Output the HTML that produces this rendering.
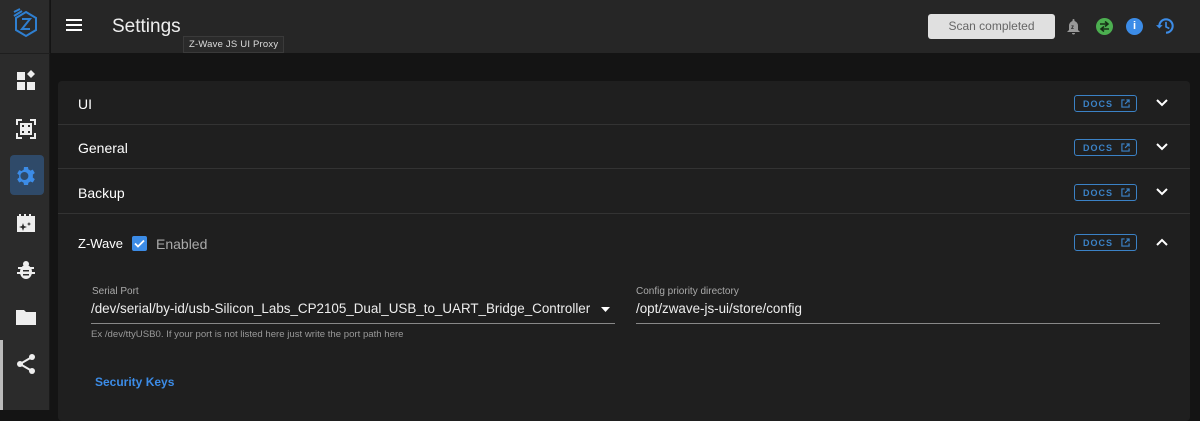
<!DOCTYPE html><html><head><style>
*{margin:0;padding:0;box-sizing:border-box}
body{width:1200px;height:410px;overflow:hidden;background:#141414;font-family:"Liberation Sans",sans-serif;color:#fff;position:relative}
.side{position:absolute;left:0;top:0;width:50px;height:410px;background:#2b2b2b;border-right:1px solid #1a1a1a}
.side .ic{position:absolute;left:14px;width:24px;height:24px}
.top{position:absolute;left:51px;top:0;right:0;height:53px;background:#262626}
.panel{position:absolute;left:58px;top:81px;width:1132px;height:340px;background:#1f1f1f;border-radius:4px}
.row{position:absolute;left:0;width:1132px;height:44px;border-bottom:1px solid #333}
.row .t{position:absolute;left:20px;top:15px;font-size:14px}
.docs{position:absolute;left:1016px;width:63px;height:17px;border:1px solid #3b82c6;border-radius:3px;color:#3b82c6;font-size:9px;letter-spacing:1px;padding:3px 0 0 8px;font-weight:bold}
.docs svg{position:absolute;right:6px;top:3px}
.chev{position:absolute;left:1098px}
.lbl{font-size:10px;color:#aaa;position:absolute}
</style></head><body>
<div class="side">
<svg style="position:absolute;left:11px;top:8px" width="30" height="30" viewBox="0 0 30 30"><polygon points="15,4 25,10 25,22 15,28 5,22 5,10" fill="none" stroke="#2f7fd0" stroke-width="2"/><path d="M3 4 L9 1 M3 8 L11 3" stroke="#2f7fd0" stroke-width="2"/><path d="M11 11h8l-8 10h8" fill="none" stroke="#2f7fd0" stroke-width="2"/></svg>
<div style="position:absolute;left:0;top:53px;width:50px;height:1px;background:#1e1e1e"></div>
<svg class="ic" style="top:69px" viewBox="0 0 24 24" fill="#eee"><rect x="3" y="3" width="8" height="8"/><rect x="3" y="13" width="8" height="8"/><rect x="13" y="13" width="8" height="8"/><polygon points="17,1 21,5 17,9 13,5"/></svg>
<svg class="ic" style="top:117px" viewBox="0 0 24 24" fill="none" stroke="#eee" stroke-width="2"><path d="M3 8V3h5M16 3h5v5M21 16v5h-5M8 21H3v-5"/><rect x="7" y="7" width="4" height="4"/><rect x="13" y="13" width="4" height="4"/><rect x="13" y="7" width="4" height="4"/><rect x="7" y="13" width="4" height="4"/></svg>
<div style="position:absolute;left:10px;top:155px;width:34px;height:40px;background:#2f4a69;border-radius:4px"></div>
<svg class="ic" style="top:164px" viewBox="0 0 24 24" fill="#3c8ce7"><path d="M12 8a4 4 0 100 8 4 4 0 000-8zm8.4 5.5l2 1.6-2 3.4-2.4-1a7.5 7.5 0 01-2 1.2L15.6 21h-4l-.4-2.3a7.5 7.5 0 01-2-1.2l-2.4 1-2-3.4 2-1.6a7 7 0 010-2.4l-2-1.6 2-3.4 2.4 1a7.5 7.5 0 012-1.2L11.6 3h4l.4 2.4a7.5 7.5 0 012 1.2l2.4-1 2 3.4-2 1.6a7 7 0 010 2.4z" transform="translate(-1.6 0)"/></svg>
<svg class="ic" style="top:211px" viewBox="0 0 24 24" fill="#eee"><path d="M3 5h18v16H3z"/><path d="M9 12l1 3 3 1-3 1-1 3-1-3-3-1 3-1zM15 11l.7 1.5 1.5.5-1.5.5-.7 1.5-.7-1.5-1.5-.5 1.5-.5z" fill="#2b2b2b"/><path d="M5 3h2v2H5zM10 3h2v2h-2zM15 3h2v2h-2z"/></svg>
<svg class="ic" style="top:258px" viewBox="0 0 24 24" fill="#eee"><ellipse cx="12" cy="14" rx="6" ry="7"/><circle cx="12" cy="6" r="3"/><path d="M4 9h4v2H4zM16 9h4v2h-4zM3 14h4v2H3zM17 14h4v2h-4z"/><path d="M9 12h6v1.5H9zM9 16h6v1.5H9z" fill="#2b2b2b"/></svg>
<svg class="ic" style="top:305px" viewBox="0 0 24 24" fill="#eee"><path d="M2 5h8l2 2h10v13H2z"/></svg>
<svg class="ic" style="top:352px" viewBox="0 0 24 24" fill="#eee"><circle cx="18" cy="5" r="3"/><circle cx="6" cy="12" r="3"/><circle cx="18" cy="19" r="3"/><path d="M18 5L6 12l12 7" stroke="#eee" stroke-width="2" fill="none"/></svg>
<div style="position:absolute;left:0;top:340px;width:3px;height:70px;background:#bbb"></div>
</div>
<div class="top">
<svg style="position:absolute;left:15px;top:18px" width="18" height="14"><path d="M0 2h16M0 7h16M0 12h16" stroke="#fff" stroke-width="2"/></svg>
<div style="position:absolute;left:61px;top:16px;font-size:19px;color:#eee">Settings</div>
<div style="position:absolute;left:132px;top:36px;background:#2a2a2a;border:1px solid #3a3a3a;color:#ddd;font-size:9.5px;padding:2px 5px;letter-spacing:.2px">Z-Wave JS UI Proxy</div>
<div style="position:absolute;left:877px;top:14px;width:127px;height:25px;background:#e0e0e0;border-radius:3px;color:#666;font-size:12px;text-align:center;line-height:25px">Scan completed</div>
<svg style="position:absolute;left:1015px;top:18px" width="15" height="17" viewBox="0 0 15 17"><path d="M7.5 1a1 1 0 011 1v1a5 5 0 013.5 5v4l2 2H1l2-2V8a5 5 0 013.5-5V2a1 1 0 011-1zM6 15h3a1.5 1.5 0 01-3 0z" fill="#999"/><text x="5" y="11" font-size="6" font-weight="bold" fill="#222" font-family="Liberation Sans">z</text></svg>
<div style="position:absolute;left:1045px;top:18px;width:17px;height:17px;border-radius:50%;background:#4caf50"></div>
<svg style="position:absolute;left:1047px;top:21px" width="13" height="11"><path d="M2 3h8M7 0.5l3 2.5-3 2.5M11 8H3M6 5.5l-3 2.5 3 2.5" stroke="#163016" stroke-width="1.6" fill="none"/></svg>
<div style="position:absolute;left:1075px;top:18px;width:17px;height:17px;border-radius:50%;background:#3c8ce7;color:#fff;font-size:11px;font-weight:bold;text-align:center;line-height:17px">i</div>
<svg style="position:absolute;left:1105px;top:16px" width="20" height="20" viewBox="0 0 24 24"><path d="M4 12a8 8 0 118 8" fill="none" stroke="#3c8ce7" stroke-width="2.5"/><path d="M0 11h8l-4 4z" fill="#3c8ce7"/><path d="M12 7v6l4 2" fill="none" stroke="#3c8ce7" stroke-width="2"/></svg>
</div>
<div class="panel">
<div class="row" style="top:0"><div class="t">UI</div></div>
<div class="row" style="top:44px"><div class="t">General</div></div>
<div class="row" style="top:89px"><div class="t">Backup</div></div>
<div class="docs" style="top:14px">DOCS<svg width="9" height="9" viewBox="0 0 10 10"><path d="M4 1H1v8h8V6M6 1h3v3M9 1L4.5 5.5" stroke="#3b82c6" fill="none" stroke-width="1.3"/></svg></div>
<div class="docs" style="top:58px">DOCS<svg width="9" height="9" viewBox="0 0 10 10"><path d="M4 1H1v8h8V6M6 1h3v3M9 1L4.5 5.5" stroke="#3b82c6" fill="none" stroke-width="1.3"/></svg></div>
<div class="docs" style="top:103px">DOCS<svg width="9" height="9" viewBox="0 0 10 10"><path d="M4 1H1v8h8V6M6 1h3v3M9 1L4.5 5.5" stroke="#3b82c6" fill="none" stroke-width="1.3"/></svg></div>
<div class="docs" style="top:153px">DOCS<svg width="9" height="9" viewBox="0 0 10 10"><path d="M4 1H1v8h8V6M6 1h3v3M9 1L4.5 5.5" stroke="#3b82c6" fill="none" stroke-width="1.3"/></svg></div>
<svg class="chev" style="top:18px" width="12" height="8"><path d="M1 1l5 5 5-5" stroke="#fff" stroke-width="2" fill="none"/></svg>
<svg class="chev" style="top:62px" width="12" height="8"><path d="M1 1l5 5 5-5" stroke="#fff" stroke-width="2" fill="none"/></svg>
<svg class="chev" style="top:107px" width="12" height="8"><path d="M1 1l5 5 5-5" stroke="#fff" stroke-width="2" fill="none"/></svg>
<svg class="chev" style="top:157px" width="12" height="8"><path d="M1 7l5-5 5 5" stroke="#fff" stroke-width="2" fill="none"/></svg>
<div style="position:absolute;left:20px;top:155px;font-size:13px">Z-Wave</div>
<div style="position:absolute;left:74px;top:155px;width:15px;height:15px;background:#3c8ce7;border-radius:2px"><svg width="15" height="15"><path d="M3 7.5l3 3 6-6" stroke="#fff" stroke-width="1.8" fill="none"/></svg></div>
<div style="position:absolute;left:98px;top:155px;font-size:14px;color:#aaa">Enabled</div>
<div class="lbl" style="left:34px;top:205px">Serial Port</div>
<div style="position:absolute;left:33px;top:220px;font-size:13.4px;color:#eee;white-space:nowrap">/dev/serial/by-id/usb-Silicon_Labs_CP2105_Dual_USB_to_UART_Bridge_Controller</div>
<svg style="position:absolute;left:543px;top:226px" width="9" height="5"><path d="M0 0h9L4.5 5z" fill="#fff"/></svg>
<div style="position:absolute;left:33px;top:242px;width:524px;height:1px;background:#888"></div>
<div class="lbl" style="left:33px;top:248px;color:#999;font-size:9.6px">Ex /dev/ttyUSB0. If your port is not listed here just write the port path here</div>
<div class="lbl" style="left:578px;top:205px">Config priority directory</div>
<div style="position:absolute;left:578px;top:220px;font-size:13.4px;color:#eee">/opt/zwave-js-ui/store/config</div>
<div style="position:absolute;left:578px;top:242px;width:524px;height:1px;background:#888"></div>
<div style="position:absolute;left:37px;top:294px;font-size:12px;font-weight:bold;color:#3c8ce7">Security Keys</div>
</div>
</body></html>
